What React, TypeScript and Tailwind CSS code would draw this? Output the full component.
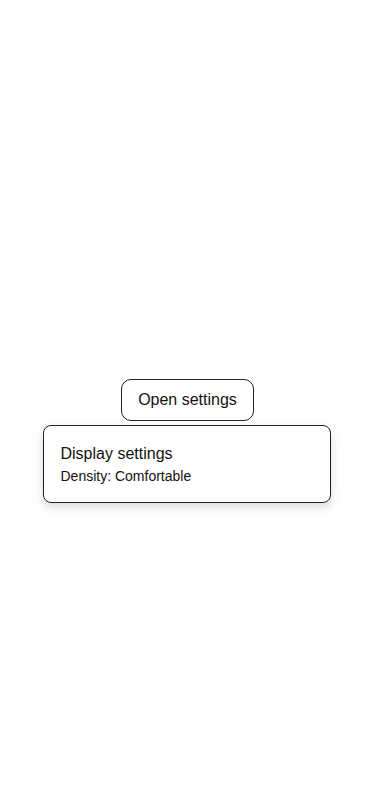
import { useState } from 'react'

export default function App() {
  const [open, setOpen] = useState(true)

  return (
    <div
      className="flex h-[800px] w-full items-center justify-center bg-white text-[#111]"
      style={{ fontFamily: '"Liberation Sans", Arial, sans-serif' }}
    >
      <div className="relative">
        <button
          onClick={() => setOpen((v) => !v)}
          className="rounded-[10px] border border-[#222] bg-white px-4 py-2 text-base leading-6 text-[#111]"
        >
          Open settings
        </button>

        {/* Popover under the trigger */}
        {open && (
          <div className="absolute left-1/2 top-[calc(100%+4px)] w-[288px] -translate-x-1/2 rounded-lg border border-[#222] bg-white p-4 shadow-[0_4px_10px_rgba(0,0,0,0.15)]">
            <p className="text-base leading-6">Display settings</p>
            <p className="text-sm leading-5">Density: Comfortable</p>
          </div>
        )}
      </div>
    </div>
  )
}
